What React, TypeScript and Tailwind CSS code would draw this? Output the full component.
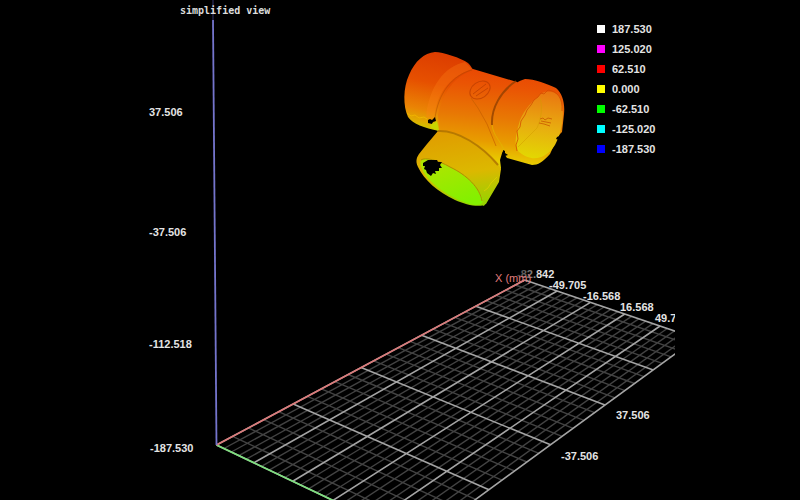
const legend = [
  { value: "187.530", swatch: "bg-white" },
  { value: "125.020", swatch: "bg-[#ff00ff]" },
  { value: "62.510", swatch: "bg-[#ff0000]" },
  { value: "0.000", swatch: "bg-[#ffff00]" },
  { value: "-62.510", swatch: "bg-[#00ff00]" },
  { value: "-125.020", swatch: "bg-[#00ffff]" },
  { value: "-187.530", swatch: "bg-[#0000ff]" },
];

const labels = [
  { text: "37.506", x: 149, y: 116 },
  { text: "-37.506", x: 149, y: 236 },
  { text: "-112.518", x: 149, y: 348 },
  { text: "-187.530", x: 150, y: 452 },
  { text: "-49.705", x: 549, y: 289 },
  { text: "-16.568", x: 583, y: 300 },
  { text: "16.568", x: 620, y: 311 },
  { text: "49.705", x: 655, y: 322 },
  { text: "37.506", x: 616, y: 419 },
  { text: "-37.506", x: 561, y: 460 },
];

const MAJOR = 5;
const SUB = 5;

// Perspective projection of the floor: u runs along the X axis, v along the Y axis.
function project(u: number, v: number) {
  const w = 1 + 0.0651 * u - 0.01842 * v;
  return {
    x: (216.5 + 95.8 * u + 32.7 * v) / w,
    y: (445 - 14.77 * u + 9.25 * v) / w,
  };
}

function segment(u1: number, v1: number, u2: number, v2: number) {
  const a = project(u1, v1);
  const b = project(u2, v2);
  return `M${a.x.toFixed(1)} ${a.y.toFixed(1)}L${b.x.toFixed(1)} ${b.y.toFixed(1)}`;
}

function gridPath(major: boolean) {
  const parts: string[] = [];
  for (let i = 0; i <= MAJOR * SUB; i++) {
    if ((i % SUB === 0) !== major) continue;
    const t = i / SUB;
    parts.push(segment(t, 0, t, MAJOR), segment(0, t, MAJOR, t));
  }
  return parts.join("");
}

function Floor() {
  return (
    <g fill="none">
      <g clipPath="url(#viewport)">
        <path d={gridPath(false)} stroke="#424242" strokeWidth="1.4" />
        <path d={gridPath(true)} stroke="#a4a4a4" strokeWidth="1.6" />
      </g>
      <path d={segment(0, 0, 0, MAJOR)} stroke="#7ee07e" strokeWidth="1.7" />
      <path d={segment(0, 0, MAJOR, 0)} stroke="#dc7a7a" strokeWidth="1.7" />
      <path d="M213 0V20" stroke="#23234a" strokeWidth="1.5" />
      <path d="M213 20L216.500 445" stroke="#7474cc" strokeWidth="1.8" />
    </g>
  );
}

function PipeTee() {
  return (
    <g>
      {/* body */}
      <path
        d="M462 66L473 69L517 82L526 110L512 150L503 150L500 160L501 168L484 206L418 160L428 148L438 131L432 92Z"
        fill="url(#heat)"
      />
      {/* upper left socket */}
      <path
        d="M435 52C443 52 461 58 468 63C471 66 472 68 473 70C455 76 443 92 438 115L439 131C424 128 413 124 408 117C403 106 403 88 409 75C415 61 424 53 435 52Z"
        fill="url(#heat-left)"
      />
      <path
        d="M465 62C445 66 429 86 426 117L434 121C435 96 448 77 472 69Z"
        fill="#ff8418"
        opacity="0.3"
      />
      <path d="M472 70C452 75 438 94 435 118" fill="none" stroke="#a84800" strokeWidth="1" opacity="0.45" />
      <path d="M407 113L411 116L415 115L419 118L424 117L427 119" fill="none" stroke="#f0b400" strokeWidth="1" />
      <path d="M428 120L430 119L432 120L435 117L436 121L433 122L432 124L428 123Z" fill="#000" />
      <path d="M430 125L437 121L439 131L431 128Z" fill="#c8d400" />
      {/* raised maker's mark */}
      <g fill="none" stroke="#b83c00" strokeWidth="1" opacity="0.7">
        <ellipse cx="480" cy="90" rx="11" ry="8" transform="rotate(-35 480 90)" />
        <path d="M473 94L486 84M476 96L488 88" />
        <path d="M471 98L478 108L487 124L496 146" stroke="#c86000" />
      </g>
      {/* lower socket */}
      <path
        d="M438 131C455 129 481 143 497 162L501 169L499 182L486 204C480 208 466 205 455 200C438 192 424 180 418 167C415 161 417 157 419 154L427 144Z"
        fill="url(#lower)"
      />
      <path d="M438 131C458 130 482 146 498 165" fill="none" stroke="#a86c00" strokeWidth="2" opacity="0.75" />
      <path
        d="M421 160C425 157 438 160 450 167C467 175 480 188 483 200C483 204 480 205 475 205C459 203 428 185 422 169C420 165 420 162 421 160Z"
        fill="url(#bore)"
      />
      <path d="M421 160C425 157 438 160 450 167C467 175 480 188 482 201" fill="none" stroke="#b48a00" strokeWidth="1" />
      <path
        d="M423 163L428 160L437 160L438 162L442 162L440 165L442 168L439 168L439 171L435 171L436 174L433 173L431 176L427 173L426 170L424 169L425 166L423 166Z"
        fill="#000"
      />
      <path d="M484 191L488 188L491 183L497 177" fill="none" stroke="#dcd000" strokeWidth="1" opacity="0.8" />
      {/* right socket */}
      <path
        d="M525 79C534 79 548 84 556 88C563 94 565 104 564 114L562 132L557 137L556 141L550 154C543 162 538 165 532 165L507 158L500 148L492 125C492 105 505 85 525 79Z"
        fill="url(#heat)"
      />
      <path d="M516 81C501 91 491 108 492 125" fill="none" stroke="#8b3d00" strokeWidth="2" opacity="0.75" />
      <path d="M492 125C494 137 500 140 504 150" fill="none" stroke="#e0b800" strokeWidth="1" opacity="0.7" />
      <path
        d="M538 97C543 90 553 90 559 96C566 108 563 131 555 145C547 158 532 164 518 151C513 144 517 131 520 120C525 109 532 101 538 97Z"
        fill="url(#bore-right)"
      />
      <path
        d="M562 111C563 98 557 91 548 90L544 94L541 93L538 97L534 100L531 105L527 110L525 115L521 121L520 127L517 131L518 139L516 145L517 151"
        fill="none"
        stroke="#d44e00"
        strokeWidth="1"
        opacity="0.8"
      />
      <path d="M540 98C543 108 541 119 537 128L518 147" fill="none" stroke="#d19b00" strokeWidth="1" opacity="0.5" />
      <path
        d="M540 119L543 118L545 120L548 118L552 119M539 123L544 124L550 126M541 121L551 123"
        fill="none"
        stroke="#c85a00"
        strokeWidth="1"
        opacity="0.8"
      />
      <path d="M503 150L505 151L505 153L508 155L505 156L503 154Z" fill="#000" />
      <path d="M564 134L557 137L556 139L559 140Z" fill="#000" />
    </g>
  );
}

function Scene() {
  return (
    <svg
      viewBox="0 0 800 500"
      role="img"
      aria-label="Point cloud of a pipe tee above a measuring grid"
      className="block h-auto w-full font-['Liberation_Sans',Arial,sans-serif] text-[11px]"
    >
      <defs>
        <clipPath id="viewport">
          <rect x="0" y="0" width="675" height="500" />
        </clipPath>
        <linearGradient id="heat" gradientUnits="userSpaceOnUse" x1="495" y1="52" x2="480" y2="206">
          <stop offset="0" stopColor="#e83a00" />
          <stop offset="0.22" stopColor="#ea5404" />
          <stop offset="0.42" stopColor="#e87804" />
          <stop offset="0.58" stopColor="#e89c00" />
          <stop offset="0.7" stopColor="#e8cc00" />
          <stop offset="1" stopColor="#9ce000" />
        </linearGradient>
        <linearGradient id="heat-left" gradientUnits="userSpaceOnUse" x1="440" y1="52" x2="424" y2="130">
          <stop offset="0" stopColor="#dc3c00" />
          <stop offset="0.4" stopColor="#e65000" />
          <stop offset="0.75" stopColor="#ea8404" />
          <stop offset="0.9" stopColor="#e0ac00" />
          <stop offset="1" stopColor="#c8cc00" />
        </linearGradient>
        <linearGradient id="lower" gradientUnits="userSpaceOnUse" x1="462" y1="130" x2="470" y2="206">
          <stop offset="0" stopColor="#e09c00" />
          <stop offset="0.55" stopColor="#dcb800" />
          <stop offset="1" stopColor="#94d400" />
        </linearGradient>
        <linearGradient id="bore" gradientUnits="userSpaceOnUse" x1="440" y1="160" x2="455" y2="205">
          <stop offset="0" stopColor="#b0e400" />
          <stop offset="1" stopColor="#84f000" />
        </linearGradient>
        <linearGradient id="bore-right" gradientUnits="userSpaceOnUse" x1="545" y1="90" x2="535" y2="162">
          <stop offset="0" stopColor="#ea7410" />
          <stop offset="0.5" stopColor="#e8ac10" />
          <stop offset="1" stopColor="#e2dc00" />
        </linearGradient>
        <linearGradient id="fade" gradientUnits="userSpaceOnUse" x1="517" y1="0" x2="553" y2="0">
          <stop offset="0" stopColor="#444444" />
          <stop offset="0.5" stopColor="#888888" />
          <stop offset="0.6" stopColor="#e4e4e4" />
        </linearGradient>
      </defs>
      <Floor />
      <PipeTee />
      <text x="517" y="278" fill="url(#fade)" fontWeight="bold">-82.842</text>
      <text x="495" y="282" fill="#e07c7c">X (mm)</text>
      <g fill="#e4e4e4" fontWeight="bold" clipPath="url(#viewport)">
        {labels.map((label) => (
          <text key={`${label.x}-${label.y}`} x={label.x} y={label.y}>
            {label.text}
          </text>
        ))}
      </g>
    </svg>
  );
}

export default function App() {
  return (
    <main className="relative min-h-screen overflow-hidden bg-black">
      <Scene />
      <h1 className="absolute top-1 left-[180px] font-['DejaVu_Sans_Mono',monospace] text-[10px] leading-[14px] font-bold text-[#dcdcdc]">
        simplified view
      </h1>
      <ul className="absolute top-[19px] left-[597px] font-['Liberation_Sans',Arial,sans-serif] text-[11px] leading-5 font-bold text-[#e4e4e4]">
        {legend.map((item) => (
          <li key={item.value} className="flex items-center gap-[7px]">
            <span className={`size-2 ${item.swatch}`} />
            {item.value}
          </li>
        ))}
      </ul>
    </main>
  );
}
